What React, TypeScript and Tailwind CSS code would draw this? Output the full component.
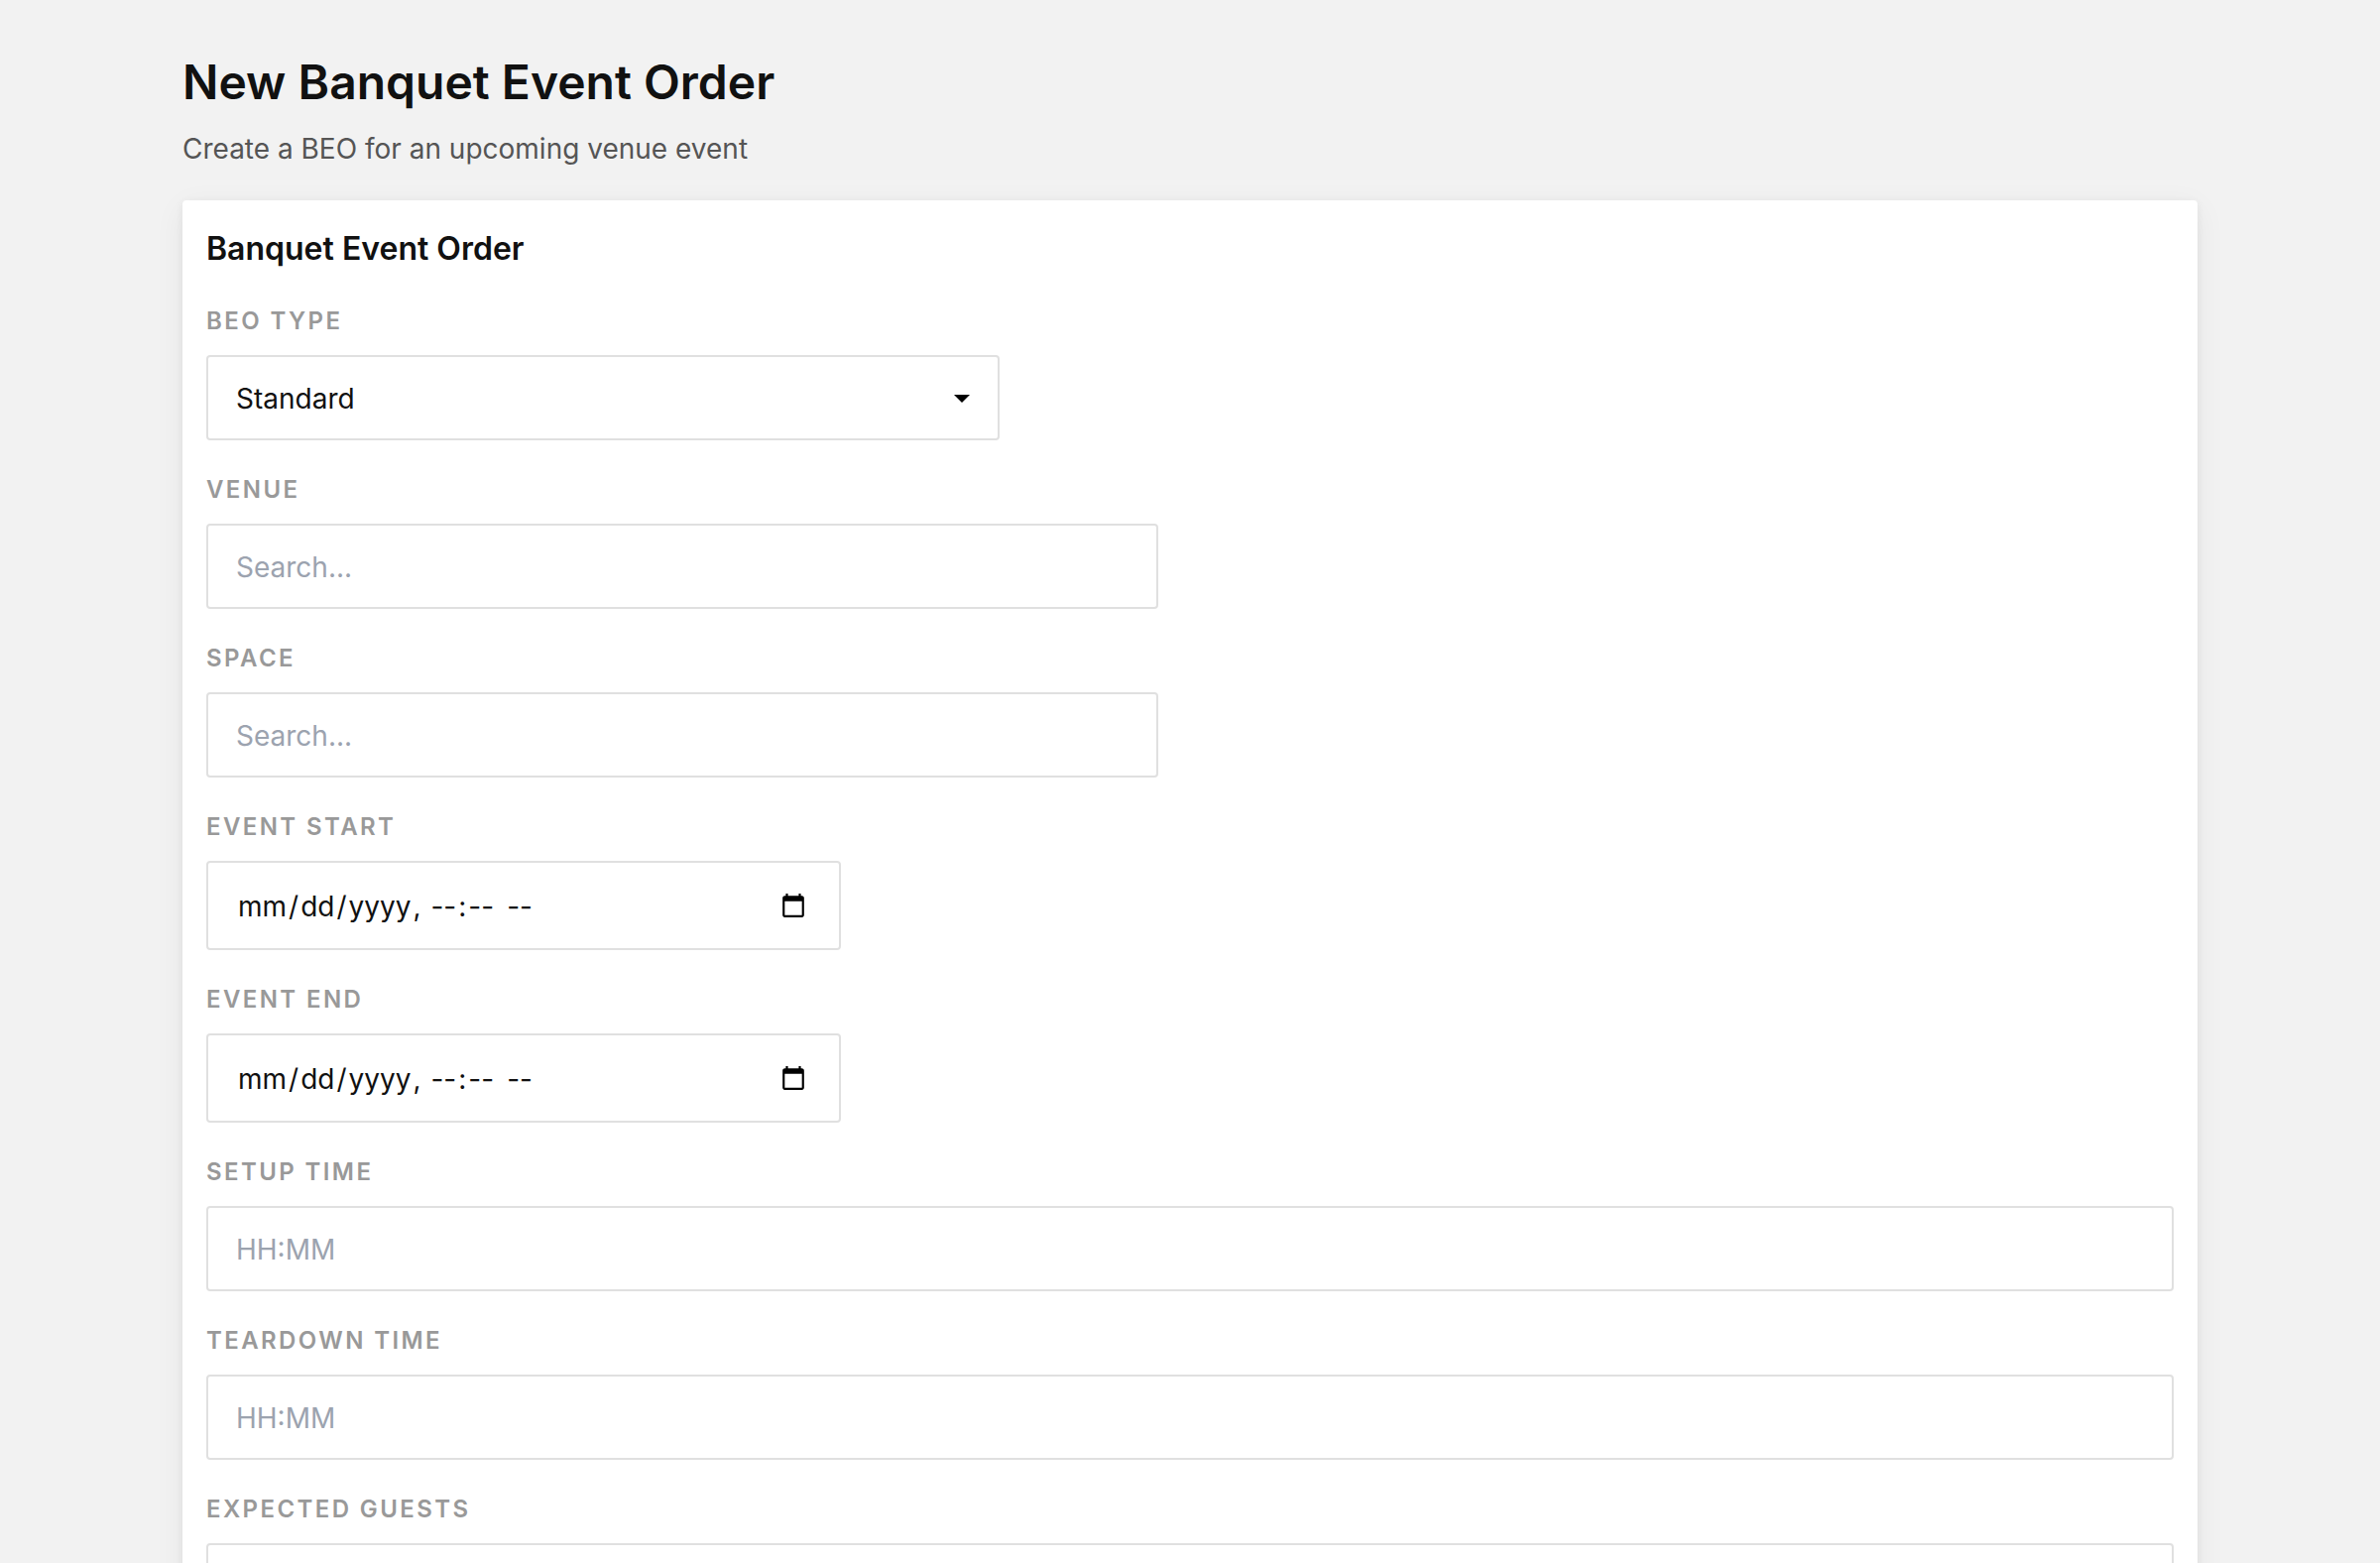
import { useState } from 'react';
import type { InputHTMLAttributes, ReactNode } from 'react';

const baseControl =
  'block w-full rounded-sm border-2 border-[#e0e0e0] bg-white px-7 text-[28px] leading-[34px] text-[#111111] outline-none placeholder:text-[#9ca3af] focus:border-[#111111]';

const textControl = `${baseControl} pt-[25px] pb-[23px]`;

type FieldProps = {
  id: string;
  label: string;
  width?: string;
  children: ReactNode;
};

function Field({ id, label, width = '', children }: FieldProps) {
  return (
    <div className="flex flex-col gap-4">
      <label
        htmlFor={id}
        className="text-[24px] leading-9 font-semibold tracking-widest text-[#999999] uppercase"
      >
        {label}
      </label>
      <div className={`w-full ${width}`}>{children}</div>
    </div>
  );
}

function TextInput(props: InputHTMLAttributes<HTMLInputElement>) {
  return <input type="text" autoComplete="off" {...props} className={textControl} />;
}

// Each editable segment gets a little breathing room on both sides
const segmentPadding = [
  '[&::-webkit-datetime-edit-month-field]:px-0.5',
  '[&::-webkit-datetime-edit-day-field]:px-0.5',
  '[&::-webkit-datetime-edit-year-field]:px-0.5',
  '[&::-webkit-datetime-edit-hour-field]:px-0.5',
  '[&::-webkit-datetime-edit-minute-field]:px-0.5',
  '[&::-webkit-datetime-edit-ampm-field]:pr-0.5',
  '[&::-webkit-datetime-edit-ampm-field]:pl-1.5',
  '[&::-webkit-calendar-picker-indicator]:mr-0.5',
].join(' ');

function DateTimeInput({ id }: { id: string }) {
  return (
    <input
      id={id}
      name={id}
      type="datetime-local"
      className={`${baseControl} pt-[27px] pb-[25px] ${segmentPadding}`}
    />
  );
}

function BeoTypeSelect({ id }: { id: string }) {
  const [value, setValue] = useState('standard');

  return (
    <div className="relative">
      <select
        id={id}
        name={id}
        value={value}
        onChange={(e) => setValue(e.target.value)}
        className={`${textControl} appearance-none`}
      >
        <option value="standard">Standard</option>
        <option value="wedding">Wedding</option>
        <option value="corporate">Corporate</option>
      </select>
      {/* Caret drawn over the select */}
      <svg
        viewBox="0 0 16 10"
        className="pointer-events-none absolute inset-y-0 right-[30px] my-auto h-2.5 w-4"
        aria-hidden="true"
      >
        <path d="M0 2h16L8 10z" fill="#000000" />
      </svg>
    </div>
  );
}

export default function App() {
  return (
    <div className="min-h-screen bg-[#f2f2f2] font-['Inter',sans-serif] text-[#111111]">
      <main className="mx-auto max-w-[2160px] px-16 py-12">
        <header className="mb-[30px]">
          <h1 className="text-[48px] leading-[70px] font-semibold">New Banquet Event Order</h1>
          <p className="mt-2.5 text-[28px] leading-[44px] text-[#555555]">
            Create a BEO for an upcoming venue event
          </p>
        </header>

        <form
          onSubmit={(e) => e.preventDefault()}
          className="flex flex-col gap-[30px] rounded-sm bg-white p-6 shadow-[0_8px_32px_rgba(0,0,0,0.06),0_2px_8px_rgba(0,0,0,0.06)]"
        >
          <h2 className="text-[32px] leading-[50px] font-semibold">Banquet Event Order</h2>

          <div className="flex flex-col gap-8">
            <Field id="beo-type" label="BEO Type" width="max-w-[800px]">
              <BeoTypeSelect id="beo-type" />
            </Field>
            <Field id="venue" label="Venue" width="max-w-[960px]">
              <TextInput id="venue" name="venue" placeholder="Search..." />
            </Field>
            <Field id="space" label="Space" width="max-w-[960px]">
              <TextInput id="space" name="space" placeholder="Search..." />
            </Field>
            <Field id="event-start" label="Event Start" width="max-w-[640px]">
              <DateTimeInput id="event-start" />
            </Field>
            <Field id="event-end" label="Event End" width="max-w-[640px]">
              <DateTimeInput id="event-end" />
            </Field>
            <Field id="setup-time" label="Setup Time">
              <TextInput id="setup-time" name="setup-time" placeholder="HH:MM" />
            </Field>
            <Field id="teardown-time" label="Teardown Time">
              <TextInput id="teardown-time" name="teardown-time" placeholder="HH:MM" />
            </Field>
            <Field id="expected-guests" label="Expected Guests">
              <TextInput id="expected-guests" name="expected-guests" inputMode="numeric" />
            </Field>
          </div>
        </form>
      </main>
    </div>
  );
}
